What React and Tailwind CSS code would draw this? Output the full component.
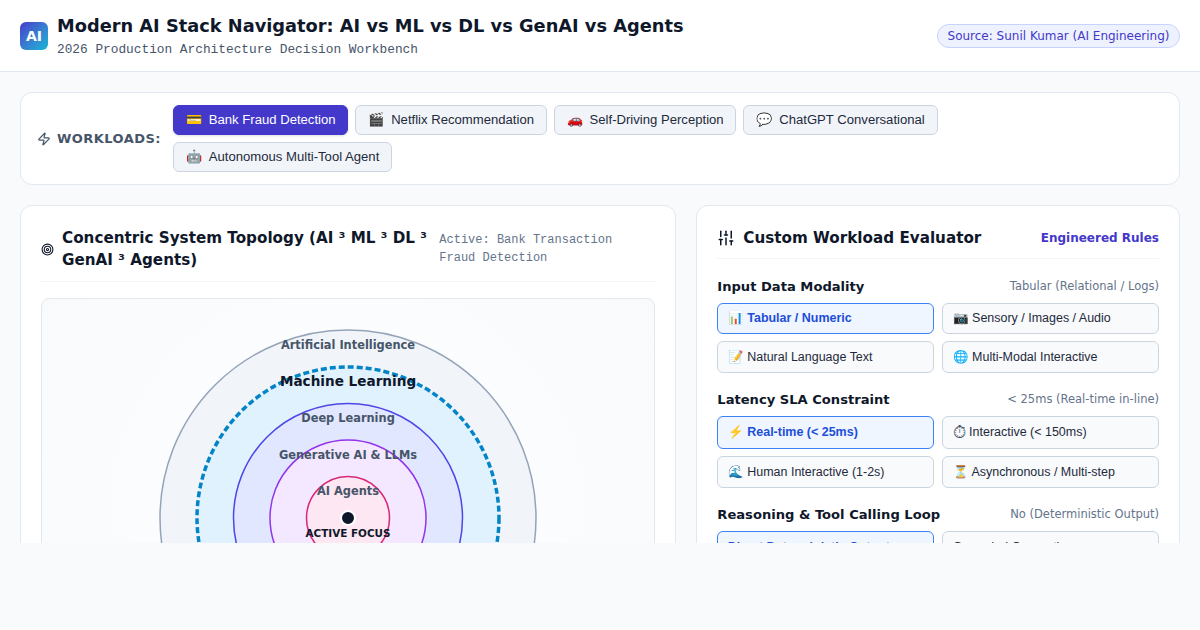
import React from "react";
import { Zap, Target, SlidersVertical } from "lucide-react";

const dejavu = "font-['DejaVu_Sans',sans-serif]";
const arial = "font-['Liberation_Sans',Arial,sans-serif]";
const mono = "font-['Liberation_Mono',monospace]";

const workloads = [
  { icon: "💳", label: "Bank Fraud Detection", active: true },
  { icon: "🎬", label: "Netflix Recommendation" },
  { icon: "🚗", label: "Self-Driving Perception" },
  { icon: "💬", label: "ChatGPT Conversational" },
  { icon: "🤖", label: "Autonomous Multi-Tool Agent" },
];

const groups = [
  {
    title: "Input Data Modality",
    value: "Tabular (Relational / Logs)",
    options: [
      { label: "📊 Tabular / Numeric", h: "h-[31px]", active: true },
      { label: "📷 Sensory / Images / Audio", h: "h-[31px]" },
      { label: "📝 Natural Language Text", h: "h-[32px]" },
      { label: "🌐 Multi-Modal Interactive", h: "h-[32px]" },
    ],
  },
  {
    title: "Latency SLA Constraint",
    value: "< 25ms (Real-time in-line)",
    options: [
      { label: "⚡ Real-time (< 25ms)", h: "h-[33px]", active: true },
      { glyph: "⏱", label: " Interactive (< 150ms)", h: "h-[33px]" },
      { label: "🌊 Human Interactive (1-2s)", h: "h-[32px]" },
      { label: "⏳ Asynchronous / Multi-step", h: "h-[32px]" },
    ],
  },
  {
    title: "Reasoning & Tool Calling Loop",
    value: "No (Deterministic Output)",
    options: [
      { label: "Direct Deterministic Output", h: "h-[32px]", active: true },
      { label: "Grounded Generation", h: "h-[32px]" },
    ],
  },
];

function Topology() {
  return (
    <svg width="612" height="440" viewBox="0 0 612 440" className="block">
      <g transform="translate(306 219)">
        <circle r="188" fill="#f1f5f9" stroke="#94a3b8" strokeWidth="1.5" />
        <circle r="151" fill="#e0f2fe" stroke="#0284c7" strokeWidth="3.5" strokeDasharray="6 3" />
        <circle r="114.5" fill="#e0e7ff" stroke="#4f46e5" strokeWidth="1.5" />
        <circle r="78" fill="#f3e8ff" stroke="#9333ea" strokeWidth="1.5" />
        <circle r="41.5" fill="#fce7f3" stroke="#db2777" strokeWidth="1.5" />
        <circle r="7" fill="#0f172a" stroke="#ffffff" strokeWidth="2" />
        <g textAnchor="middle" fontFamily="DejaVu Sans" fontWeight="700" fontSize="11.4" fill="#475569">
          <text y="-169">Artificial Intelligence</text>
          <text y="-132" fontSize="13.6" fill="#0f172a">Machine Learning</text>
          <text y="-96">Deep Learning</text>
          <text y="-59">Generative AI &amp; LLMs</text>
          <text y="-23">AI Agents</text>
          <text y="19" fontSize="10.4" fill="#0f172a">ACTIVE FOCUS</text>
        </g>
      </g>
    </svg>
  );
}

export default function App() {
  return (
    <div className={`min-h-screen bg-[#f8fafc] text-[#0f172a] ${dejavu}`}>
      <div className="h-[543px] overflow-hidden">
        <header className="flex h-[72px] items-center justify-between border-b border-[#e2e8f0] bg-white px-5">
          <div className="flex items-center gap-[9px]">
            <div className="flex h-7 w-7 items-center justify-center rounded-md bg-gradient-to-br from-[#4338ca] to-[#06b6d4] text-sm font-bold text-white">
              AI
            </div>
            <div>
              <h1 className="text-[17.8px] leading-[26px] font-bold">
                Modern AI Stack Navigator: AI vs ML vs DL vs GenAI vs Agents
              </h1>
              <p className={`mt-[2px] text-[12.8px] leading-[17px] text-[#475569] ${mono}`}>
                2026 Production Architecture Decision Workbench
              </p>
            </div>
          </div>
          <div className="rounded-full border border-[#c7d2fe] bg-[#eef2ff] px-[9.5px] py-[3px] text-xs leading-4 text-[#4338ca]">
            Source: Sunil Kumar (AI Engineering)
          </div>
        </header>

        <main className="flex flex-col gap-5 p-5">
          <section className="flex items-center gap-3 rounded-xl border border-[#e2e8f0] bg-white px-4 py-3">
            <div className="flex shrink-0 items-center gap-1.5 text-[13px] font-bold tracking-[0.035em] text-[#475569]">
              <Zap size={14} />
              WORKLOADS:
            </div>
            <div className="flex w-[790px] flex-wrap gap-x-[7px] gap-y-[7px]">
              {workloads.map((w) => (
                <button
                  key={w.label}
                  className={`flex h-[30px] items-center gap-[7px] rounded-md border px-[11.8px] text-[13.12px] ${arial} ${
                    w.active
                      ? "border-[#4338ca] bg-[#4338ca] text-white shadow-sm"
                      : "border-[#cbd5e1] bg-[#f1f5f9] text-[#1e293b]"
                  }`}
                >
                  <span>{w.icon}</span>
                  {w.label}
                </button>
              ))}
            </div>
          </section>

          <div className="grid grid-cols-[656.3px_483.7px] items-start gap-5">
            <section className="rounded-xl border border-[#e2e8f0] bg-white p-5">
              <div className="flex items-center justify-between border-b border-[#f1f5f9] pt-px pb-2.5">
                <div className="flex w-[386px] items-center gap-2 text-[15.2px] leading-[22px] font-bold">
                  <Target size={13} className="shrink-0" />
                  <span>Concentric System Topology (AI ³ ML ³ DL ³ GenAI ³ Agents)</span>
                </div>
                <div className={`w-[216px] text-xs leading-[18px] text-[#64748b] ${mono}`}>
                  Active: Bank Transaction Fraud Detection
                </div>
              </div>
              <div className="mt-4 overflow-hidden rounded-lg border border-[#e2e8f0] bg-[radial-gradient(circle,#ffffff,#f8fafc)]">
                <Topology />
              </div>
            </section>

            <section className="rounded-xl border border-[#e2e8f0] bg-white p-5">
              <div className="flex items-center justify-between border-b border-[#f1f5f9] pt-0.5 pb-2.5">
                <div className="flex items-center gap-2 text-[15.2px] leading-[20px] font-bold">
                  <SlidersVertical size={18} />
                  Custom Workload Evaluator
                </div>
                <span className="text-xs font-bold text-[#4338ca]">Engineered Rules</span>
              </div>
              <div className="mt-[19px] flex flex-col gap-[18px]">
                {groups.map((g) => (
                  <div key={g.title}>
                    <div className="mb-[7px] flex items-start justify-between">
                      <span className="text-[13.1px] leading-[18px] font-bold">{g.title}</span>
                      <span className="text-[11.5px] leading-[16px] text-[#64748b]">{g.value}</span>
                    </div>
                    <div className="grid grid-cols-2 gap-x-2 gap-y-[7px]">
                      {g.options.map((o) => (
                        <button
                          key={o.label}
                          className={`${o.h} rounded-md border px-[9.5px] text-left text-[12.48px] ${arial} ${
                            o.active
                              ? "border-[#3b82f6] bg-[#eff6ff] font-bold text-[#1d4ed8]"
                              : "border-[#cbd5e1] bg-[#f8fafc] text-[#1e293b]"
                          }`}
                        >
                          {o.glyph && (
                            <span className={`align-[-2px] text-[16.5px] leading-none text-[#475569] ${dejavu}`}>
                              {o.glyph}
                            </span>
                          )}
                          {o.label}
                        </button>
                      ))}
                    </div>
                  </div>
                ))}
              </div>
            </section>
          </div>
        </main>
      </div>
    </div>
  );
}
